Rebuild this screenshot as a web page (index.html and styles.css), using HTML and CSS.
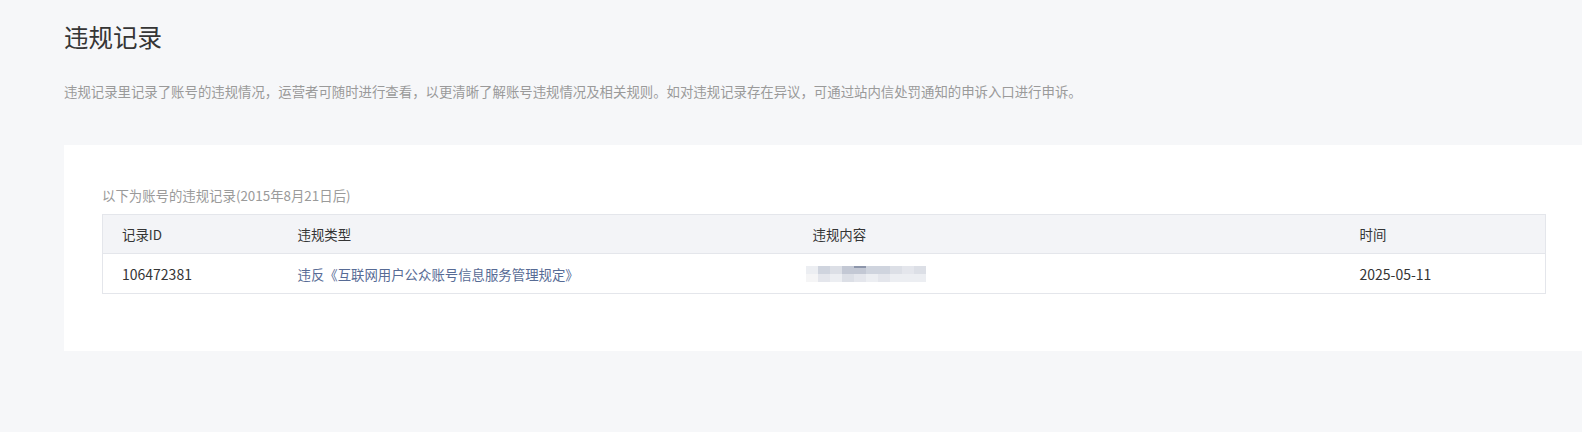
FILE: index.html
```html
<!DOCTYPE html>
<html lang="zh-CN">
<head>
  <meta charset="UTF-8">
  <title>违规记录</title>
  <link rel="stylesheet" href="styles.css">
</head>
<body>
  <div class="page">
    <h2 class="page-title">违规记录</h2>
    <p class="page-desc">违规记录里记录了账号的违规情况，运营者可随时进行查看，以更清晰了解账号违规情况及相关规则。如对违规记录存在异议，可通过站内信处罚通知的申诉入口进行申诉。</p>

    <div class="panel">
      <div class="panel-tips">以下为账号的违规记录(2015年8月21日后)</div>
      <table class="record-table">
        <colgroup>
          <col class="col-id">
          <col class="col-type">
          <col class="col-content">
          <col class="col-time">
        </colgroup>
        <thead>
          <tr>
            <th>记录ID</th>
            <th>违规类型</th>
            <th>违规内容</th>
            <th>时间</th>
          </tr>
        </thead>
        <tbody>
          <tr>
            <td class="num">106472381</td>
            <td><a href="#" class="rule-link">违反《互联网用户公众账号信息服务管理规定》</a></td>
            <td>
              <div class="mosaic">
                <span class="s1"></span><span class="s4"></span><span class="s3"></span><span class="s5"></span><span class="s5 mark"></span><span class="s4"></span><span class="s4"></span><span class="s3"></span><span class="s2"></span><span class="s3"></span>
                <span class="s0"></span><span class="s2"></span><span class="s1"></span><span class="s3"></span><span class="s2"></span><span class="s1"></span><span class="s2"></span><span class="s1"></span><span class="s1"></span><span class="s1"></span>
              </div>
            </td>
            <td class="num">2025-05-11</td>
          </tr>
        </tbody>
      </table>
    </div>
  </div>
</body>
</html>
```

FILE: styles.css
```css
body {
  margin: 0;
  background: #f6f7f9;
  font-family: "Noto Sans CJK SC", "Noto Sans", sans-serif;
  color: #353535;
  font-size: 13.4px;
}

.page {
  padding: 19px 0 0 64px;
}

.page-title {
  margin: 0;
  font-size: 24.5px;
  line-height: 36px;
  font-weight: normal;
  color: #353535;
}

.page-desc {
  margin: 26px 0 0;
  font-size: 13.4px;
  line-height: 20px;
  color: #9a9a9a;
}

.panel {
  margin-top: 44px;
  background: #fff;
  padding: 40px 36px 57px 38px;
}

.panel-tips {
  color: #9a9a9a;
  line-height: 20px;
  margin-bottom: 9px;
}

.record-table {
  width: 100%;
  border-collapse: collapse;
  table-layout: fixed;
  border: 1px solid #e4e6eb;
}

.col-id { width: 176px; }
.col-type { width: 515px; }
.col-content { width: 547px; }

.record-table th,
.record-table td {
  text-align: left;
  padding: 0 19px;
  font-weight: normal;
  white-space: nowrap;
}

.record-table th {
  height: 38px;
  background: #f3f4f7;
  border-bottom: 1px solid #e4e6eb;
  color: #353535;
}

.record-table td {
  height: 39px;
  color: #353535;
}

.record-table td.num {
  font-size: 14px;
}

.rule-link {
  color: #576b95;
  text-decoration: none;
}

.mosaic {
  display: grid;
  grid-template-columns: repeat(10, 12px);
  grid-template-rows: 8px 8px;
  margin-left: -7px;
  width: 120px;
}

.mosaic span { display: block; }
.mosaic .s0 { background: #f5f5f6; }
.mosaic .s1 { background: #eceef2; }
.mosaic .s2 { background: #e4e6ec; }
.mosaic .s3 { background: #dcdfe6; }
.mosaic .s4 { background: #cfd4de; }
.mosaic .s5 { background: #c3c8d4; }
.mosaic .mark { box-shadow: inset 0 2px 0 #8d96ab; }
```
